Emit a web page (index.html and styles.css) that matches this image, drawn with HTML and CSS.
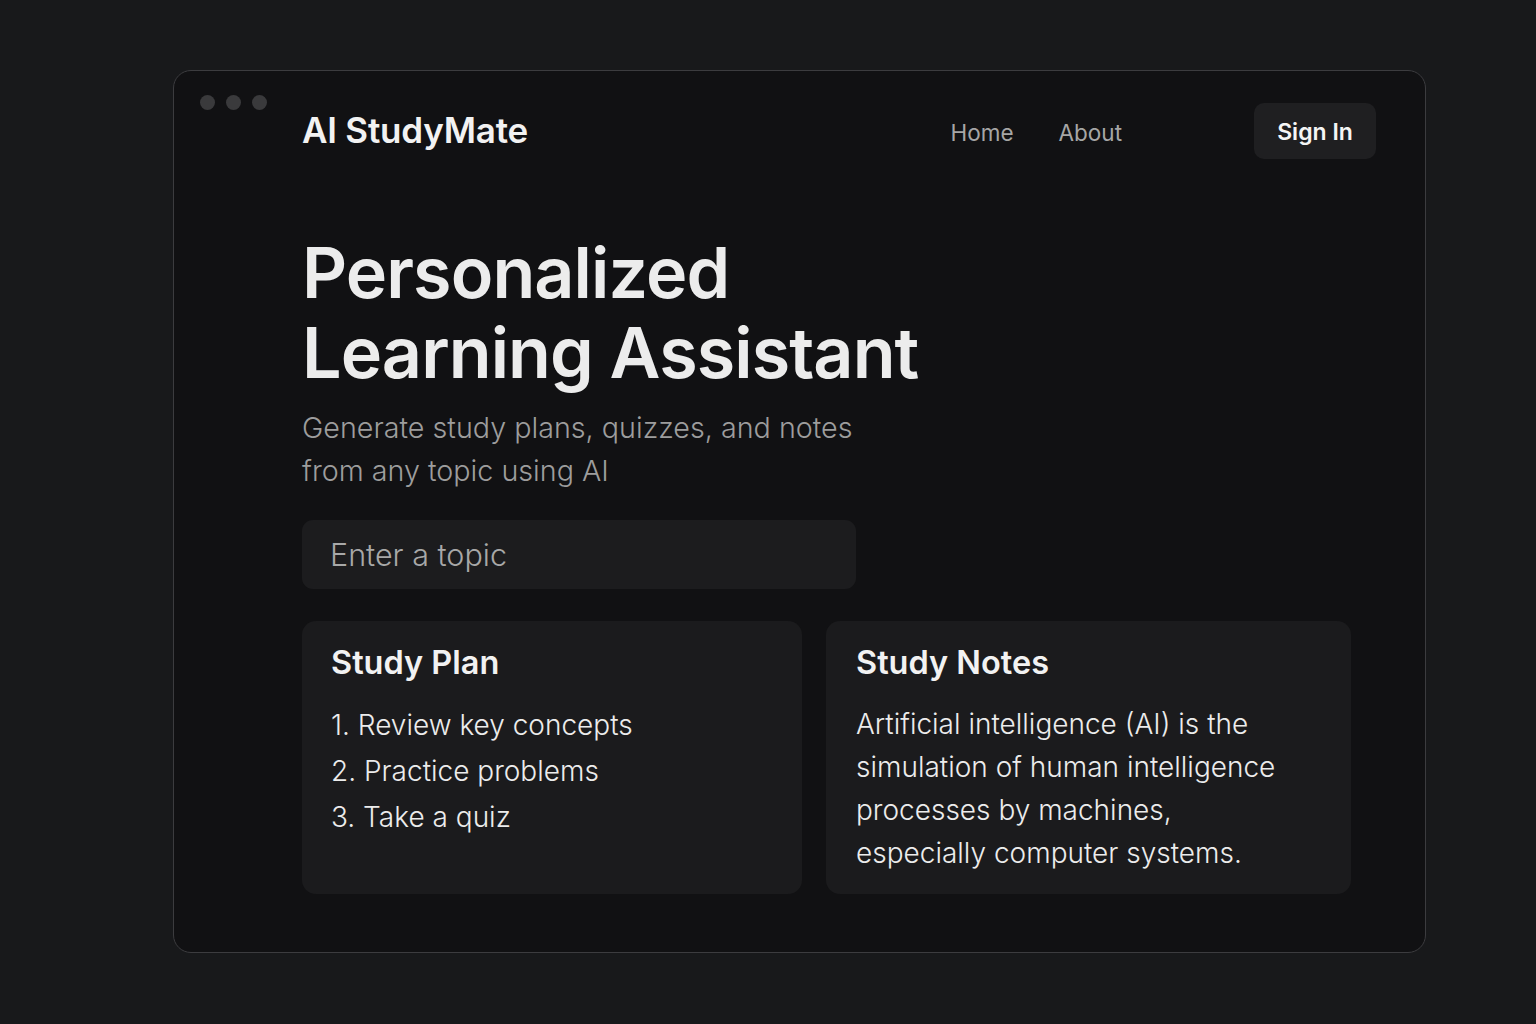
FILE: index.html
```html
<!DOCTYPE html>
<html lang="en">
<head>
<meta charset="utf-8">
<title>AI StudyMate</title>
<link rel="stylesheet" href="styles.css">
</head>
<body>
<div class="window">
  <div class="dots"><span></span><span></span><span></span></div>
  <header class="header">
    <div class="brand">AI StudyMate</div>
    <nav class="nav">
      <a class="nav-link" href="#">Home</a>
      <a class="nav-link" href="#">About</a>
    </nav>
    <button class="signin">Sign In</button>
  </header>
  <main class="main">
    <h1 class="hero-title">Personalized<br>Learning Assistant</h1>
    <p class="hero-sub">Generate study plans, quizzes, and notes<br>from any topic using AI</p>
    <div class="topic-input">Enter a topic</div>
    <section class="cards">
      <div class="card card-plan">
        <h2 class="card-title">Study Plan</h2>
        <ol class="plan-list">
          <li>1. Review key concepts</li>
          <li>2. Practice problems</li>
          <li>3. Take a quiz</li>
        </ol>
      </div>
      <div class="card card-notes">
        <h2 class="card-title">Study Notes</h2>
        <p class="notes-text">Artificial intelligence (AI) is the simulation of human intelligence processes by machines, especially computer systems.</p>
      </div>
    </section>
  </main>
</div>
</body>
</html>
```

FILE: styles.css
```css
* { box-sizing: border-box; }
html, body { margin: 0; padding: 0; }
body {
  background: #18191b;
  font-family: Inter, "Noto Sans", "Liberation Sans", sans-serif;
  color: #ececec;
  width: 1536px;
  height: 1024px;
  overflow: hidden;
}
.window {
  position: relative;
  margin: 70px 0 0 173px;
  width: 1253px;
  height: 883px;
  background: #111113;
  border: 1px solid #3c3c3f;
  border-radius: 18px;
}
.dots {
  position: absolute;
  top: 24px;
  left: 26px;
  display: flex;
  gap: 11px;
}
.dots span {
  width: 15px;
  height: 15px;
  border-radius: 50%;
  background: #3a3a3c;
}
.header {
  display: flex;
  align-items: center;
  padding: 32px 49px 0 128px;
  height: 88px;
}
.brand {
  font-size: 35px;
  font-weight: 600;
  color: #f2f2f2;
  letter-spacing: -0.2px;
  flex: 1;
  padding-bottom: 2px;
}
.nav {
  display: flex;
  gap: 45px;
  margin-right: 132px;
  padding-top: 2px;
}
.nav-link {
  font-size: 22.5px;
  color: #a6a6a6;
  text-decoration: none;
}
.signin {
  width: 122px;
  height: 56px;
  border: none;
  border-radius: 10px;
  background: #1f1f21;
  color: #f5f5f5;
  font-family: inherit;
  font-size: 23px;
  font-weight: 600;
  padding-top: 3px;
}
.main {
  padding: 0 74px 0 128px;
}
.hero-title {
  margin: 74px 0 0;
  font-size: 70px;
  line-height: 80px;
  font-weight: 600;
  letter-spacing: -0.9px;
  color: #ececec;
}
.hero-sub {
  margin: 13px 0 0;
  font-size: 28.7px;
  line-height: 43px;
  font-weight: 300;
  color: #9d9d9d;
}
.topic-input {
  margin-top: 28px;
  width: 554px;
  height: 69px;
  border-radius: 11px;
  background: #1c1c1e;
  padding: 0 28px;
  display: flex;
  align-items: center;
  font-size: 30.5px;
  font-weight: 300;
  color: #a8a8a8;
}
.cards {
  margin-top: 32px;
  display: grid;
  grid-template-columns: 500px 525px;
  gap: 24px;
}
.card {
  height: 273px;
  background: #1b1b1d;
  border-radius: 14px;
  padding: 22px 29px;
}
.card-notes {
  padding-left: 30px;
}
.card-title {
  margin: 0;
  font-size: 32.5px;
  line-height: 40px;
  font-weight: 600;
  color: #f2f2f2;
}
.plan-list {
  list-style: none;
  margin: 19px 0 0;
  padding: 0;
  font-size: 28px;
  line-height: 46px;
  font-weight: 300;
  color: #ececec;
}
.notes-text {
  margin: 20px 0 0;
  font-size: 28px;
  line-height: 43px;
  font-weight: 300;
  color: #ececec;
  max-width: 440px;
}
```
